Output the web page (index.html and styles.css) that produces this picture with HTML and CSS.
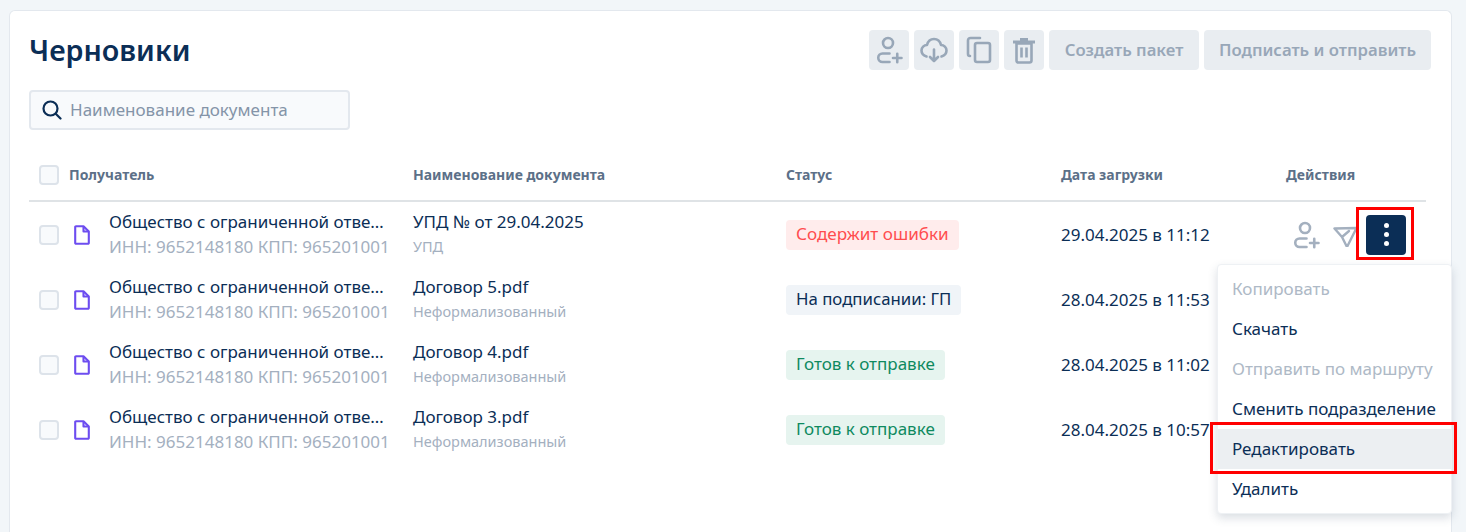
FILE: index.html
```html
<!DOCTYPE html>
<html lang="ru">
<head>
<meta charset="utf-8">
<title>Черновики</title>
<link rel="stylesheet" href="styles.css">
</head>
<body>
<svg class="defs" width="0" height="0" aria-hidden="true">
  <symbol id="user-plus" viewBox="0 0 28 28"><g fill="none" stroke="currentColor" stroke-width="2.600" stroke-linecap="round"><circle cx="13" cy="7" r="5"/><path d="M14.500 17.500H7.500a4.250 4.250 0 0 0 0 8.500H14.500"/><path d="M18 22h8.500M22.250 17.800v8.400"/></g></symbol>
  <symbol id="file" viewBox="0 0 16 20"><path d="M2 1.200h7.500L14.800 6.500V18a.8.8 0 0 1-.8.800H2a.8.8 0 0 1-.8-.8V2a.8.8 0 0 1 .8-.8z" fill="none" stroke="#6d4df0" stroke-width="2.100" stroke-linejoin="round"/><path d="M9.500 1.200v5.300h5.300" fill="none" stroke="#6d4df0" stroke-width="2.100" stroke-linejoin="round"/></symbol>
</svg>
<main class="card">
  <header class="top">
    <h1 class="title">Черновики</h1>
    <div class="tools">
      <button class="tool"><svg class="ic28"><use href="#user-plus"/></svg></button>
      <button class="tool"><svg class="ic28" viewBox="0 0 28 28" fill="none" stroke="currentColor" stroke-width="2.600" stroke-linecap="round" stroke-linejoin="round"><path d="M6.500 20.500C3.500 19.500 1.500 17.500 1.500 14.500c0-3 2.500-5.500 5.500-5.500C8 5 10.500 3 14 3s6 2 7 6c3 0 5.500 2.500 5.500 5.500 0 3-2 5-5 6"/><path d="M14 13.500V25M10 21l4 4 4-4"/></svg></button>
      <button class="tool"><svg class="ic28" viewBox="0 0 28 28" fill="none" stroke="currentColor" stroke-width="2.600" stroke-linecap="round" stroke-linejoin="round"><path d="M5 20c-1.200 0-2-.8-2-2V4.500C3 3 4 2 5.500 2H15"/><rect x="10" y="7" width="15" height="19" rx="2"/></svg></button>
      <button class="tool"><svg class="ic28" viewBox="0 0 28 28" fill="none" stroke="currentColor" stroke-width="2.600"><path d="M6.500 7.500h15v17a2 2 0 0 1-2 2h-11a2 2 0 0 1-2-2z"/><path d="M11.500 11.500v10M16.500 11.500v10"/><path d="M3 6h22M10 3.500h8" stroke-width="2.800"/></svg></button>
      <button class="act act-a">Создать пакет</button>
      <button class="act act-b">Подписать и отправить</button>
    </div>
  </header>
  <div class="search">
    <svg class="search-ic" viewBox="0 0 20 20" fill="none" stroke="#0b2e56" stroke-width="2.200" stroke-linecap="round"><circle cx="8.500" cy="8.500" r="7"/><path d="M14 14l4.500 4.500"/></svg>
    <span class="ph">Наименование документа</span>
  </div>
  <section class="table">
    <div class="row head">
      <span class="cb"></span>
      <span class="hd">Получатель</span>
      <span class="hd">Наименование документа</span>
      <span class="hd">Статус</span>
      <span class="hd">Дата загрузки</span>
      <span class="hd">Действия</span>
    </div>
    <div class="row">
      <span class="cb"></span>
      <div class="org"><svg class="file"><use href="#file"/></svg><div class="two"><div class="main">Общество с ограниченной отве…</div><div class="inn">ИНН: 9652148180 КПП: 965201001</div></div></div>
      <div class="two"><div class="main">УПД № от 29.04.2025</div><div class="sub">УПД</div></div>
      <div class="cell-badge"><span class="badge err">Содержит ошибки</span></div>
      <div class="main">29.04.2025 в 11:12</div>
      <div class="actions">
        <svg class="ic28 muted"><use href="#user-plus"/></svg>
        <svg class="send" viewBox="0 0 24 24" fill="none" stroke="currentColor" stroke-width="2.400" stroke-linejoin="round" stroke-linecap="round"><path d="M1.500 5.500L23.500 5 14 24 9 14zM9 14l7-6"/></svg>
        <button class="kebab"><i></i><i></i><i></i></button>
      </div>
    </div>
    <div class="row">
      <span class="cb"></span>
      <div class="org"><svg class="file"><use href="#file"/></svg><div class="two"><div class="main">Общество с ограниченной отве…</div><div class="inn">ИНН: 9652148180 КПП: 965201001</div></div></div>
      <div class="two"><div class="main">Договор 5.pdf</div><div class="sub">Неформализованный</div></div>
      <div class="cell-badge"><span class="badge info">На подписании: ГП</span></div>
      <div class="main">28.04.2025 в 11:53</div>
    </div>
    <div class="row">
      <span class="cb"></span>
      <div class="org"><svg class="file"><use href="#file"/></svg><div class="two"><div class="main">Общество с ограниченной отве…</div><div class="inn">ИНН: 9652148180 КПП: 965201001</div></div></div>
      <div class="two"><div class="main">Договор 4.pdf</div><div class="sub">Неформализованный</div></div>
      <div class="cell-badge"><span class="badge ok">Готов к отправке</span></div>
      <div class="main">28.04.2025 в 11:02</div>
    </div>
    <div class="row">
      <span class="cb"></span>
      <div class="org"><svg class="file"><use href="#file"/></svg><div class="two"><div class="main">Общество с ограниченной отве…</div><div class="inn">ИНН: 9652148180 КПП: 965201001</div></div></div>
      <div class="two"><div class="main">Договор 3.pdf</div><div class="sub">Неформализованный</div></div>
      <div class="cell-badge"><span class="badge ok">Готов к отправке</span></div>
      <div class="main">28.04.2025 в 10:57</div>
    </div>
  </section>
</main>
<nav class="menu">
  <div class="item off">Копировать</div>
  <div class="item">Скачать</div>
  <div class="item off">Отправить по маршруту</div>
  <div class="item">Сменить подразделение</div>
  <div class="item hot">Редактировать</div>
  <div class="item">Удалить</div>
</nav>
<div class="mark mark-a"></div>
<div class="mark mark-b"></div>
</body>
</html>
```

FILE: styles.css
```css
* { box-sizing: border-box; }
html, body { height: 100%; }
body {
  margin: 0;
  padding: 10px 14px 0 9px;
  background: #f2f6f9;
  color: #0b2e56;
  font-family: "Noto Sans", "Open Sans", sans-serif;
  overflow: hidden;
  position: relative;
}
.defs { position: absolute; }
.card {
  background: #fff;
  border: 1px solid #e3e8ee;
  border-bottom: 0;
  border-radius: 6px 6px 0 0;
  height: 522px;
  padding: 19px 20px 0 19px;
}
.top { display: flex; justify-content: space-between; align-items: flex-start; height: 40px; }
.title { margin: 0; font-size: 28.700px; line-height: 40px; font-weight: 600; color: #0b2e56; }
.tools { display: flex; gap: 5px; }
button { border: 0; font-family: inherit; padding: 0; }
.tool {
  width: 40px; height: 40px; border-radius: 4px; background: #e9edf1; color: #98a7b8;
  display: flex; align-items: center; justify-content: center;
}
.ic28 { width: 28px; height: 28px; display: block; }
.act {
  height: 40px; padding-bottom: 2px; border-radius: 4px; background: #e9edf1; color: #98a7b8;
  font-size: 16.700px; font-weight: 600; white-space: nowrap;
}
.act-a { width: 150px; }
.act-b { width: 227px; }
.search {
  margin-top: 20px; width: 321px; height: 40px;
  border: 2px solid #e3e8ee; border-radius: 4px; background: #f8fafc;
  display: flex; align-items: center; gap: 8px; padding-left: 11px;
}
.search-ic { width: 20px; height: 20px; flex: none; }
.ph { font-size: 17px; line-height: 22px; color: #8494a8; }
.table { margin-top: 20px; width: 1397px; }
.row {
  display: grid;
  grid-template-columns: 30px 344px 373px 275px 225px 140px;
  align-items: center;
  height: 65px;
  padding-left: 10px;
}
.head {
  height: 52px; border-bottom: 2px solid #dfe3e6;
  font-size: 14px; font-weight: 700; color: #5c7088;
}
.hd { margin-top: -2px; }
.cb { width: 20px; height: 20px; border: 2px solid #dde3ea; border-radius: 4px; background: #f8fafc; display: block; }
.org { display: flex; align-items: center; min-width: 0; }
.file { width: 16px; height: 20px; flex: none; margin: 0 19px 0 5px; }
.two { min-width: 0; display: flex; flex-direction: column; gap: 3px; margin-top: -2px; }
.org .two { width: 284px; margin-top: -1px; }
.main { font-size: 17px; line-height: 22px; color: #0b2e56; white-space: nowrap; }
.sub { font-size: 14.500px; line-height: 20px; color: #a4b0bf; }
.inn { font-size: 17px; line-height: 22px; color: #a4b0bf; white-space: nowrap; }
.cell-badge { line-height: 0; }
.badge { display: inline-block; padding: 0 10px; height: 30px; line-height: 28px; border-radius: 4px; font-size: 16.800px; }
.err { background: #ffecec; color: #ff4d4f; font-size: 17.100px; }
.info { background: #f0f4f8; color: #0b2e56; }
.ok { background: #e6f4ef; color: #0f8a5f; font-size: 17px; }
.actions { display: flex; align-items: center; }
.muted { color: #a4b0bf; margin-left: 6px; }
.send { width: 24px; height: 24px; color: #a4b0bf; margin-left: 13px; }
.kebab {
  width: 40px; height: 40px; border-radius: 4px; background: #0b2e56; margin-left: 9px;
  display: flex; flex-direction: column; align-items: center; justify-content: center; gap: 4px; flex: none;
}
.kebab i { width: 5px; height: 5px; border-radius: 50%; background: #fff; }
.menu {
  position: absolute; left: 1217px; top: 264px; width: 235px; height: 250px;
  padding: 4px 0; background: #fff; border-radius: 4px;
  border: 1px solid #eef1f4;
  box-shadow: 0 4px 10px rgba(50, 70, 100, .18);
}
.item { height: 40px; line-height: 40px; padding-left: 14px; font-size: 17px; color: #0b2e56; white-space: nowrap; }
.off { color: #aeb9c6; }
.hot { background: #eceff2; }
.mark { position: absolute; border: 3px solid #f00; }
.mark-a { left: 1356px; top: 207px; width: 58px; height: 53px; }
.mark-b { left: 1210px; top: 422px; width: 247px; height: 52px; }
```
